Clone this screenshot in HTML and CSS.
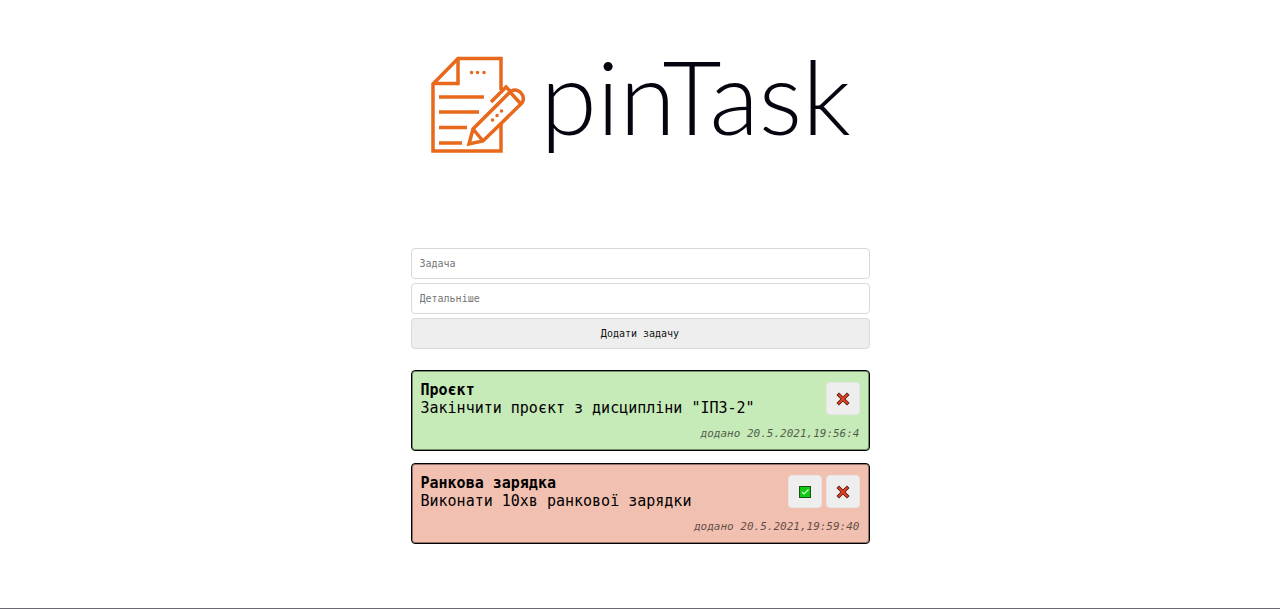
FILE: index.html
```html
<!DOCTYPE html>
<html lang="uk">
<head>
<meta charset="utf-8">
<meta name="viewport" content="width=device-width, initial-scale=1">
<title>pinTask</title>
<link rel="stylesheet" href="styles.css">
</head>
<body>
<main class="app">
  <h1 class="logo">
    <svg class="logo-mark" viewBox="0 0 98 98" aria-hidden="true">
      <path d="M70 34V2.500H27L2 28V95H70V67"/>
      <path d="M27 2.500V27.500H2"/>
      <path d="M8 41H53M8 56H48M8 71.500H36M8 87H31"/>
      <path d="M38 88L42 73L80 35A8.500 8.500 0 0 1 91 47L52 85Z"/>
      <path d="M42 73L52 85M78 35L90 48M60 46L75 31L80 36"/>
      <path class="dots" d="M40.500 16.500h.1M46.500 16.500h.1M53 16.500h.1M61.500 64h.1M66 59.500h.1M70.500 55h.1"/>
    </svg>
    <span class="logo-name">pinTask</span>
  </h1>
  <form class="form">
    <input class="field" type="text" placeholder="Задача" aria-label="Задача">
    <input class="field" type="text" placeholder="Детальніше" aria-label="Детальніше">
    <button class="submit" type="button">Додати задачу</button>
  </form>
  <section class="tasks">
    <article class="task task-done">
      <div class="task-main">
        <div class="task-text">
          <h2 class="task-title">Проєкт</h2>
          <p class="task-details">Закінчити проєкт з дисципліни "ІПЗ-2"</p>
        </div>
        <div class="actions">
          <button class="action" type="button" aria-label="Видалити">
            <svg class="icon" viewBox="0 0 14 14" aria-hidden="true"><path class="cross-edge" d="M3 3L11 11M11 3L3 11"/><path class="cross" d="M3 3L11 11M11 3L3 11"/></svg>
          </button>
        </div>
      </div>
      <p class="task-date">додано 20.5.2021,19:56:4</p>
    </article>
    <article class="task task-open">
      <div class="task-main">
        <div class="task-text">
          <h2 class="task-title">Ранкова зарядка</h2>
          <p class="task-details">Виконати 10хв ранкової зарядки</p>
        </div>
        <div class="actions">
          <button class="action" type="button" aria-label="Виконано">
            <svg class="icon" viewBox="0 0 14 14" aria-hidden="true"><rect class="check-box" x="1.500" y="1.500" width="11" height="11"/><path class="check" d="M4 7L6 9L10.500 4.500"/></svg>
          </button>
          <button class="action" type="button" aria-label="Видалити">
            <svg class="icon" viewBox="0 0 14 14" aria-hidden="true"><path class="cross-edge" d="M3 3L11 11M11 3L3 11"/><path class="cross" d="M3 3L11 11M11 3L3 11"/></svg>
          </button>
        </div>
      </div>
      <p class="task-date">додано 20.5.2021,19:59:40</p>
    </article>
  </section>
</main>
</body>
</html>
```
FILE: styles.css
```css
* {
  box-sizing: border-box;
}

body {
  min-height: 100vh;
  margin: 0;
  border-bottom: 1px solid #6b6872;
  background: #fff;
  color: #000;
  font-family: "DejaVu Sans Mono", monospace;
}

.app {
  width: 100%;
  max-width: 459px;
  margin: 0 auto;
}

.logo {
  display: flex;
  align-items: flex-start;
  gap: 12px;
  height: 248px;
  margin: 0;
  padding: 56px 0 0 20px;
  font-weight: 300;
}

.logo-mark {
  flex: none;
  width: 98px;
  height: 98px;
  fill: none;
  stroke: #e8681c;
  stroke-width: 3.5;
}

.dots {
  stroke-linecap: round;
}

.logo-name {
  color: #05050f;
  font-family: Lato, sans-serif;
  font-size: 102px;
  line-height: 80px;
}

.form {
  display: grid;
  gap: 4px;
}

.field,
.submit {
  width: 100%;
  height: 31px;
  padding: 0 8px;
  border: 1px solid #d9d9d9;
  border-radius: 4px;
  background: #fff;
  font-family: inherit;
  font-size: 10px;
}

.field::placeholder {
  color: #757575;
}

.submit {
  background: #eee;
  color: #111;
}

.tasks {
  display: grid;
  gap: 12px;
  padding-top: 21px;
}

.task {
  padding: 10px 9px 9px;
  border: 1px solid #000;
  border-radius: 4px;
  box-shadow: inset 0 0 0 1px rgba(0, 0, 0, .4);
}

.task-done {
  background: #c7eab9;
}

.task-open {
  background: #f2c0b1;
}

.task-main {
  display: flex;
  justify-content: space-between;
}

.task-title,
.task-details {
  margin: 0;
  font-size: 15px;
  line-height: 18px;
}

.actions {
  display: flex;
  gap: 4px;
  padding-top: 1px;
}

.action {
  display: grid;
  place-items: center;
  width: 34px;
  height: 33px;
  padding: 0;
  border: 1px solid #e6e6e6;
  border-radius: 4px;
  background: #eee;
}

.icon {
  width: 14px;
  height: 14px;
  fill: none;
}

.cross-edge {
  stroke: #4a1a14;
  stroke-width: 3.6;
  stroke-linecap: square;
}

.cross {
  stroke: #e8401f;
  stroke-width: 2;
  stroke-linecap: square;
}

.check-box {
  fill: #12c912;
  stroke: #1c4d1c;
  stroke-width: 1;
}

.check {
  stroke: #d8ffd0;
  stroke-width: 1.2;
}

.task-date {
  margin: 0;
  padding-top: 10px;
  font-size: 11px;
  font-style: italic;
  line-height: 14px;
  text-align: right;
  opacity: .6;
}
```
